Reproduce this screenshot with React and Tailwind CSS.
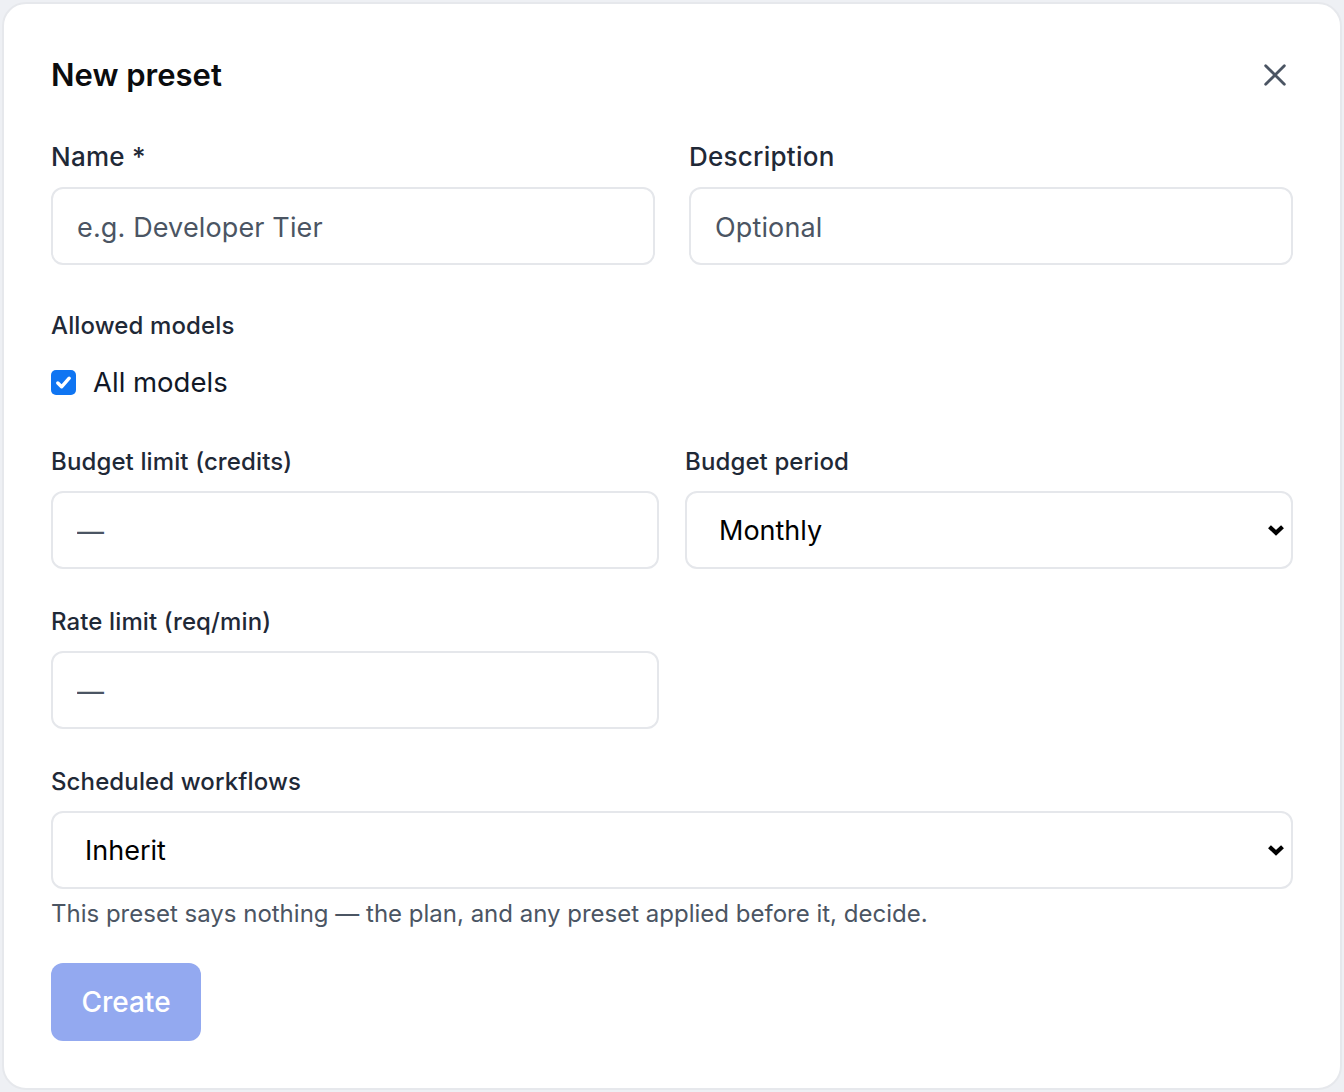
import React, { useState } from "react";

const font = { fontFamily: "Inter, 'Noto Sans', sans-serif" };

function Chevron() {
  return (
    <svg
      viewBox="0 0 18 12"
      className="pointer-events-none absolute right-[8px] top-1/2 h-[12px] w-[18px] -translate-y-1/2"
    >
      <path d="M2.5 2.8 L9 8.8 L15.5 2.8" fill="none" stroke="#000" strokeWidth="4.2" strokeLinecap="butt" strokeLinejoin="miter" />
    </svg>
  );
}

function TextField({ placeholder }) {
  return (
    <input
      type="text"
      placeholder={placeholder}
      className="block h-[78px] w-full rounded-[12px] border-2 border-[#e5e7eb] bg-white px-[24px] pt-[3px] text-[27px] tracking-[0.005em] text-gray-900 outline-none placeholder:text-[#4b5563]"
    />
  );
}

function SelectField({ value, options }) {
  const [val, setVal] = useState(value);
  return (
    <div className="relative">
      <select
        value={val}
        onChange={(e) => setVal(e.target.value)}
        className="block h-[78px] w-full appearance-none rounded-[12px] border-2 border-[#e5e7eb] bg-white pl-[32px] pt-[2px] text-[27px] text-black outline-none"
      >
        {options.map((o) => (
          <option key={o}>{o}</option>
        ))}
      </select>
      <Chevron />
    </div>
  );
}

export default function App() {
  const [all, setAll] = useState(true);

  return (
    <div className="h-[1092px] w-full bg-[#eef0f4] p-[2px]" style={font}>
      <div className="h-full rounded-[24px] border-2 border-[#e6e8ec] bg-white px-[47px] pt-[53px]">
        <div className="flex h-[36px] items-center justify-between">
          <h2 className="text-[31px] font-semibold leading-[36px] text-[#0b0c0e]">New preset</h2>
          <button className="mr-[4px] text-[#4b5563]">
            <svg viewBox="0 0 24 24" className="h-[28px] w-[28px]" fill="none" stroke="currentColor" strokeWidth="2.4" strokeLinecap="round">
              <path d="M4 4 L20 20 M20 4 L4 20" />
            </svg>
          </button>
        </div>

        <div className="mt-[48px] grid grid-cols-2 gap-x-[34px]">
          <div>
            <label className="block text-[26px] font-medium leading-[32px] tracking-[0.01em] text-[#1f2937]">Name *</label>
            <div className="mt-[14px]">
              <TextField placeholder="e.g. Developer Tier" />
            </div>
          </div>
          <div>
            <label className="block text-[26px] font-medium leading-[32px] tracking-[0.01em] text-[#1f2937]">Description</label>
            <div className="mt-[14px]">
              <TextField placeholder="Optional" />
            </div>
          </div>
        </div>

        <div className="mt-[46px] text-[24px] font-medium leading-[30px] tracking-[0.005em] text-[#1f2937]">Allowed models</div>
        <label className="mt-[24px] flex h-[34px] items-center gap-[17px]" onClick={() => setAll(!all)}>
          <span
            className={`flex h-[25px] w-[25px] items-center justify-center rounded-[5px] ${
              all ? "bg-[#0f75f2]" : "border-2 border-gray-400 bg-white"
            }`}
          >
            {all && (
              <svg viewBox="0 0 20 20" className="h-[19px] w-[19px]" fill="none" stroke="#fff" strokeWidth="3.6" strokeLinecap="round" strokeLinejoin="round">
                <path d="M4 10.5 L8 14.5 L16 5.5" />
              </svg>
            )}
          </span>
          <span className="text-[27.5px] leading-[34px] text-[#111827]">All models</span>
        </label>

        <div className="mt-[48px] grid grid-cols-2 gap-x-[26px]">
          <div>
            <label className="block text-[24px] font-medium leading-[30px] tracking-[0.005em] text-[#1f2937]">Budget limit (credits)</label>
            <div className="mt-[14px]">
              <TextField placeholder="—" />
            </div>
          </div>
          <div>
            <label className="block text-[24px] font-medium leading-[30px] tracking-[0.005em] text-[#1f2937]">Budget period</label>
            <div className="mt-[14px]">
              <SelectField value="Monthly" options={["Daily", "Weekly", "Monthly"]} />
            </div>
          </div>
        </div>

        <div className="mt-[38px] grid grid-cols-2 gap-x-[26px]">
          <div>
            <label className="block text-[24px] font-medium leading-[30px] tracking-[0.005em] text-[#1f2937]">Rate limit (req/min)</label>
            <div className="mt-[14px]">
              <TextField placeholder="—" />
            </div>
          </div>
        </div>

        <div className="mt-[38px]">
          <label className="block text-[24px] font-medium leading-[30px] tracking-[0.005em] text-[#1f2937]">Scheduled workflows</label>
          <div className="mt-[14px]">
            <SelectField value="Inherit" options={["Inherit", "Allow", "Deny"]} />
          </div>
          <p className="mt-[10px] text-[24px] leading-[30px] text-[#4b5563]">
            This preset says nothing — the plan, and any preset applied before it, decide.
          </p>
        </div>

        <button
          disabled
          className="mt-[34px] h-[78px] w-[150px] rounded-[12px] bg-[#93a9f0] text-[28px] font-medium text-white"
        >
          Create
        </button>
      </div>
    </div>
  );
}
